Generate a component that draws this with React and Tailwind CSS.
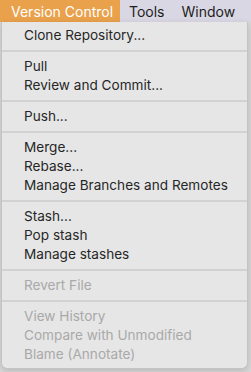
const GROUPS = [
  [{ label: 'Clone Repository...' }],
  [{ label: 'Pull' }, { label: 'Review and Commit...' }],
  [{ label: 'Push...' }],
  [{ label: 'Merge...' }, { label: 'Rebase...' }, { label: 'Manage Branches and Remotes' }],
  [{ label: 'Stash...' }, { label: 'Pop stash' }, { label: 'Manage stashes' }],
  [{ label: 'Revert File', disabled: true }],
  [
    { label: 'View History', disabled: true },
    { label: 'Compare with Unmodified', disabled: true },
    { label: 'Blame (Annotate)', disabled: true },
  ],
]

export default function App() {
  return (
    <div className="relative h-[372px] w-[251px] overflow-hidden bg-[#d8d8d8] font-['Inter',sans-serif]">
      {/* menu bar */}
      <div className="flex h-[22px] items-center bg-[#dad7e4] text-[14px] text-[#1d1d1d]">
        <div className="flex h-full w-[120px] items-center bg-[#e9a14b] pl-[11px] text-white">
          Version Control
        </div>
        <div className="ml-[9px]">Tools</div>
        <div className="ml-[17px]">Window</div>
      </div>

      {/* dropdown */}
      <div className="absolute left-[1px] top-[22px] w-[247px] rounded-b-[6px] border border-t-0 border-[#c4c4c4] bg-[#e6e6e6] py-[4px] text-[13.6px] shadow-[0_2px_6px_rgba(0,0,0,0.15)]">
        {GROUPS.map((group, gi) => (
          <div key={gi}>
            {gi > 0 && (
              <div className="flex h-[12px] items-center">
                <div className="h-[2px] w-full bg-[#d2d2d2]" />
              </div>
            )}
            {group.map((item) => (
              <div
                key={item.label}
                className={`flex h-[19px] items-center pl-[22px] ${item.disabled ? 'text-[#a9a9a9]' : 'text-[#262626]'}`}
              >
                {item.label}
              </div>
            ))}
          </div>
        ))}
      </div>
    </div>
  )
}
